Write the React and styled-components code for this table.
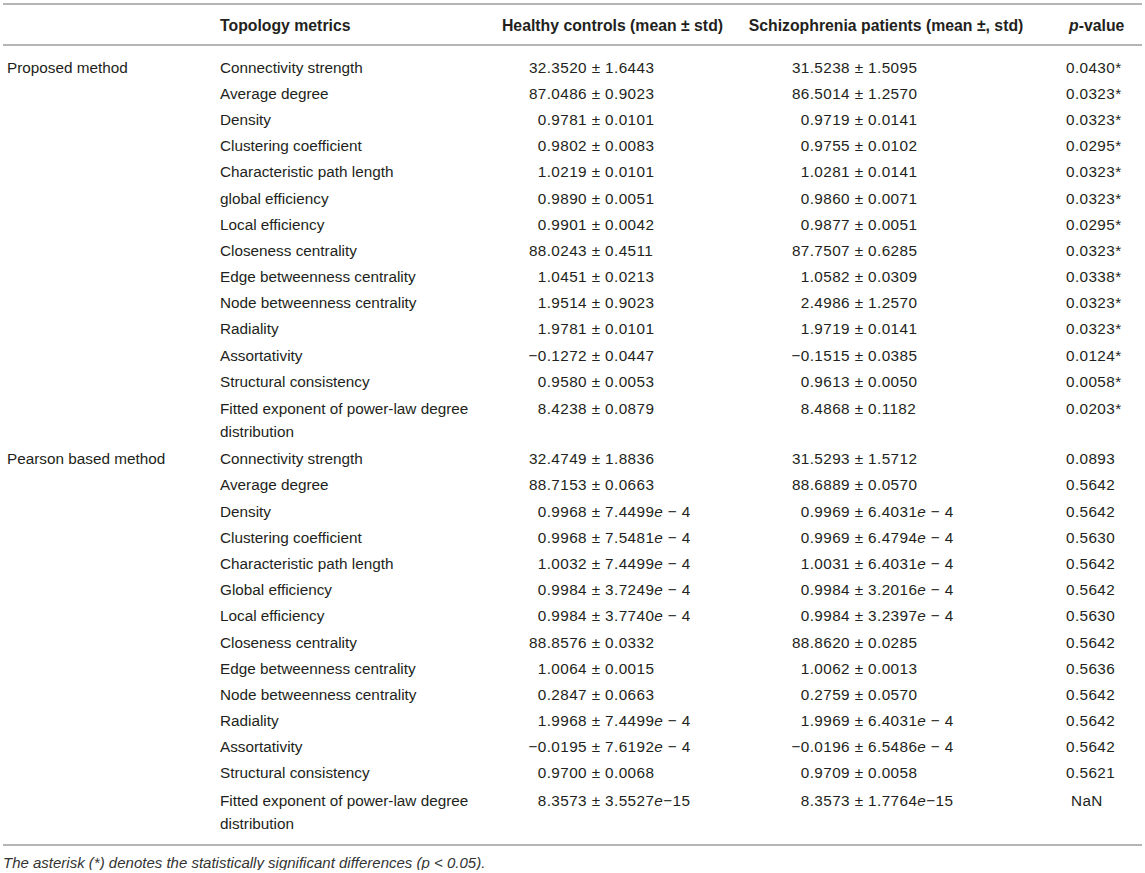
import React from 'react';
import styled, { createGlobalStyle } from 'styled-components';

const GlobalStyle = createGlobalStyle`
  body {
    margin: 0;
    background: #fff;
    color: #231f20;
    font-family: 'Liberation Sans', Arial, Helvetica, sans-serif;
  }
`;

const Page = styled.div`
  padding: 3px 3px 0 3px;
  width: 1139px;
`;

const Table = styled.table`
  width: 1139px;
  border-collapse: collapse;
  table-layout: fixed;
  font-size: 15.3px;
  line-height: 23px;
  border-top: 2px solid #b5b5b5;
  border-bottom: 2px solid #b5b5b5;

  tbody tr:first-child td {
    padding-top: 9.6px;
  }
  tbody tr:last-child td {
    padding-bottom: 9.6px;
  }
`;

const HeadCell = styled.th`
  font-weight: bold;
  font-size: 15.8px;
  text-align: ${(props) => props.align || 'left'};
  padding: 8.5px 0 7.5px ${(props) => props.indent || 0}px;
  border-bottom: 2px solid #b5b5b5;
  white-space: nowrap;
`;

const Cell = styled.td`
  vertical-align: top;
  padding: ${(props) => (props.tall ? 2.6 : 1.6)}px 0 ${(props) => (props.tall ? 2.6 : 1.6)}px
    ${(props) => props.indent || 0}px;
  text-align: left;
`;

const NumberCell = styled(Cell)`
  letter-spacing: 0.4px;
  white-space: nowrap;
`;

const Mean = styled.span`
  display: inline-block;
  width: ${(props) => props.width}px;
  text-align: right;
`;

const Spread = styled.span`
  white-space: pre;
`;

const Footnote = styled.p`
  margin: 10px 0 0 0;
  font-size: 15px;
  line-height: 14px;
  font-style: italic;
  color: #333;
`;

const proposed = [
  ['Connectivity strength', '32.3520', '1.6443', '31.5238', '1.5095', '0.0430*'],
  ['Average degree', '87.0486', '0.9023', '86.5014', '1.2570', '0.0323*'],
  ['Density', '0.9781', '0.0101', '0.9719', '0.0141', '0.0323*'],
  ['Clustering coefficient', '0.9802', '0.0083', '0.9755', '0.0102', '0.0295*'],
  ['Characteristic path length', '1.0219', '0.0101', '1.0281', '0.0141', '0.0323*'],
  ['global efficiency', '0.9890', '0.0051', '0.9860', '0.0071', '0.0323*'],
  ['Local efficiency', '0.9901', '0.0042', '0.9877', '0.0051', '0.0295*'],
  ['Closeness centrality', '88.0243', '0.4511', '87.7507', '0.6285', '0.0323*'],
  ['Edge betweenness centrality', '1.0451', '0.0213', '1.0582', '0.0309', '0.0338*'],
  ['Node betweenness centrality', '1.9514', '0.9023', '2.4986', '1.2570', '0.0323*'],
  ['Radiality', '1.9781', '0.0101', '1.9719', '0.0141', '0.0323*'],
  ['Assortativity', '\u22120.1272', '0.0447', '\u22120.1515', '0.0385', '0.0124*'],
  ['Structural consistency', '0.9580', '0.0053', '0.9613', '0.0050', '0.0058*'],
  ['Fitted exponent of power-law degree distribution', '8.4238', '0.0879', '8.4868', '0.1182', '0.0203*'],
];

const pearson = [
  ['Connectivity strength', '32.4749', '1.8836', '31.5293', '1.5712', '0.0893'],
  ['Average degree', '88.7153', '0.0663', '88.6889', '0.0570', '0.5642'],
  ['Density', '0.9968', '7.4499e \u2212 4', '0.9969', '6.4031e \u2212 4', '0.5642'],
  ['Clustering coefficient', '0.9968', '7.5481e \u2212 4', '0.9969', '6.4794e \u2212 4', '0.5630'],
  ['Characteristic path length', '1.0032', '7.4499e \u2212 4', '1.0031', '6.4031e \u2212 4', '0.5642'],
  ['Global efficiency', '0.9984', '3.7249e \u2212 4', '0.9984', '3.2016e \u2212 4', '0.5642'],
  ['Local efficiency', '0.9984', '3.7740e \u2212 4', '0.9984', '3.2397e \u2212 4', '0.5630'],
  ['Closeness centrality', '88.8576', '0.0332', '88.8620', '0.0285', '0.5642'],
  ['Edge betweenness centrality', '1.0064', '0.0015', '1.0062', '0.0013', '0.5636'],
  ['Node betweenness centrality', '0.2847', '0.0663', '0.2759', '0.0570', '0.5642'],
  ['Radiality', '1.9968', '7.4499e \u2212 4', '1.9969', '6.4031e \u2212 4', '0.5642'],
  ['Assortativity', '\u22120.0195', '7.6192e \u2212 4', '\u22120.0196', '6.5486e \u2212 4', '0.5642'],
  ['Structural consistency', '0.9700', '0.0068', '0.9709', '0.0058', '0.5621'],
  ['Fitted exponent of power-law degree distribution', '8.3573', '3.5527e\u221215', '8.3573', '1.7764e\u221215', 'NaN'],
];

const groups = [
  { label: 'Proposed method', rows: proposed },
  { label: 'Pearson based method', rows: pearson },
];

// italic "e" in scientific notation
function Sci({ value }) {
  const i = value.indexOf('e');
  if (i < 0) return value;
  return (
    <>
      {value.slice(0, i)}
      <i>e</i>
      {value.slice(i + 1)}
    </>
  );
}

function Value({ mean, std, width }) {
  return (
    <>
      <Mean width={width}>{mean}</Mean>
      <Spread>
        {' \u00b1 '}
        <Sci value={std} />
      </Spread>
    </>
  );
}

export default function App() {
  return (
    <Page>
      <GlobalStyle />
      <Table>
        <colgroup>
          <col style={{ width: 213 }} />
          <col style={{ width: 264 }} />
          <col style={{ width: 265 }} />
          <col style={{ width: 282 }} />
          <col style={{ width: 115 }} />
        </colgroup>
        <thead>
          <tr>
            <HeadCell />
            <HeadCell indent={4}>Topology metrics</HeadCell>
            <HeadCell align="center">Healthy controls (mean ± std)</HeadCell>
            <HeadCell align="center">Schizophrenia patients (mean ±, std)</HeadCell>
            <HeadCell indent={42}>
              <i>p</i>-value
            </HeadCell>
          </tr>
        </thead>
        <tbody>
          {groups.map((group) =>
            group.rows.map((row, index) => {
              const tall = row[0].length > 30;
              return (
                <tr key={group.label + index}>
                  {index === 0 && (
                    <Cell rowSpan={group.rows.length} indent={4}>
                      {group.label}
                    </Cell>
                  )}
                  <Cell indent={4} tall={tall}>{row[0]}</Cell>
                  <NumberCell tall={tall}>
                    <Value mean={row[1]} std={row[2]} width={107} />
                  </NumberCell>
                  <NumberCell tall={tall}>
                    <Value mean={row[3]} std={row[4]} width={105} />
                  </NumberCell>
                  <NumberCell tall={tall} indent={row[5] === 'NaN' ? 44 : 39}>
                    {row[5]}
                  </NumberCell>
                </tr>
              );
            })
          )}
        </tbody>
      </Table>
      <Footnote>
        The asterisk (*) denotes the statistically significant differences (p &lt; 0.05).
      </Footnote>
    </Page>
  );
}
